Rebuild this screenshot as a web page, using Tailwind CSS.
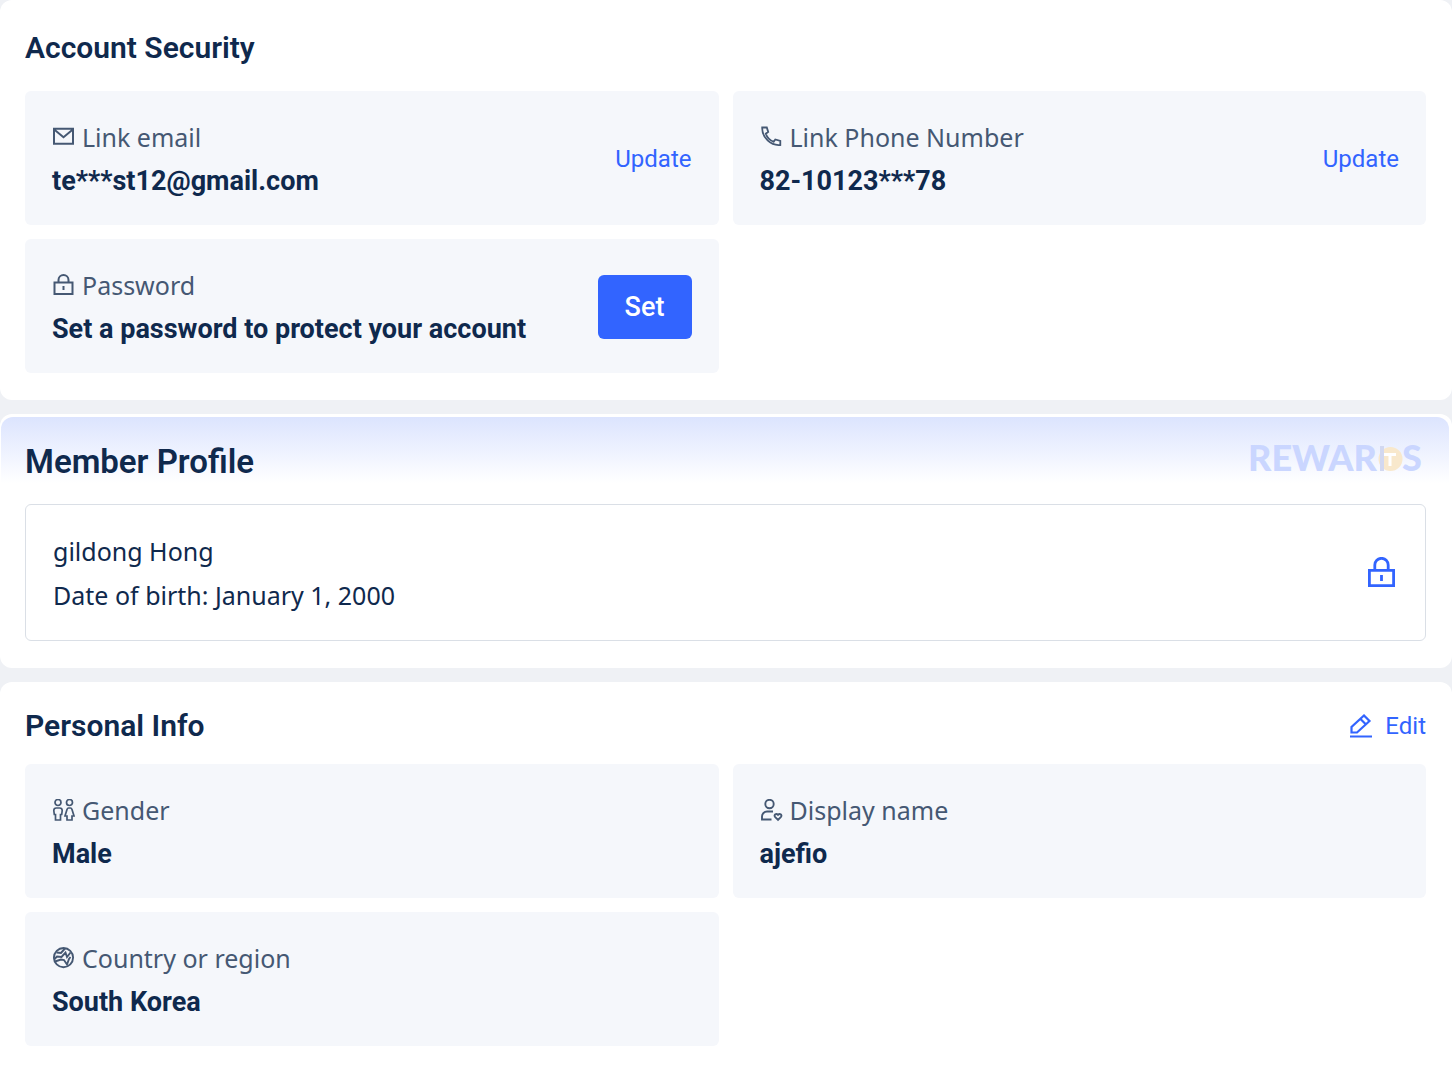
<!DOCTYPE html>
<html lang="en">
<head>
<meta charset="utf-8">
<meta name="viewport" content="width=device-width, initial-scale=1">
<title>Account</title>
<script src="https://cdn.jsdelivr.net/npm/@tailwindcss/browser@4"></script>
</head>
<body class="flex min-h-screen flex-col gap-[14px] bg-[#eff1f5] font-[Roboto,sans-serif] text-[#0f294d]">

<section class="rounded-xl bg-white pt-6 pr-[26px] pb-[27px] pl-[25px]">
  <h2 class="text-[30px] leading-[48px] font-semibold">Account Security</h2>
  <div class="mt-[19px] grid grid-cols-2 gap-[14px]">
    <div class="flex items-center justify-between rounded-md bg-[#f5f7fb] pt-6 pr-[27px] pb-[22px] pl-[27px]">
      <dl>
        <dt class="flex items-center gap-[7px] font-['Noto_Sans',sans-serif] text-[25px] leading-[44px] text-[#455873]">
          <svg class="size-[23px]" viewBox="0 0 23 23" fill="none" stroke="currentColor" stroke-width="2"><path d="M2 2.800h19v15H2zM2.500 3.800l9 7.500 9-7.500"/></svg>
          Link email
        </dt>
        <dd class="text-[27px] leading-[44px] font-bold">te***st12@gmail.com</dd>
      </dl>
      <a href="#" class="text-2xl text-[#3264ff]">Update</a>
    </div>
    <div class="flex items-center justify-between rounded-md bg-[#f5f7fb] pt-6 pr-[27px] pb-[22px] pl-[27px]">
      <dl>
        <dt class="flex items-center gap-[7px] font-['Noto_Sans',sans-serif] text-[25px] leading-[44px] text-[#455873]">
          <svg class="size-[23px]" viewBox="0 0 23 23" fill="none" stroke="currentColor" stroke-width="1.800"><path d="M2.200 1.500H6.800L8.200 6 5.800 7.700C7 11.200 10 14.200 13.600 15.800L15.300 13.500 20.300 15V19C11 20 1.800 11.700 2.200 1.500Z"/></svg>
          Link Phone Number
        </dt>
        <dd class="text-[27px] leading-[44px] font-bold">82-10123***78</dd>
      </dl>
      <a href="#" class="text-2xl text-[#3264ff]">Update</a>
    </div>
    <div class="flex items-center justify-between rounded-md bg-[#f5f7fb] pt-6 pr-[27px] pb-[22px] pl-[27px]">
      <dl>
        <dt class="flex items-center gap-[7px] font-['Noto_Sans',sans-serif] text-[25px] leading-[44px] text-[#455873]">
          <svg class="size-[23px]" viewBox="0 0 23 23" fill="none" stroke="currentColor" stroke-width="2"><path d="M2.500 8.500h18v11.500h-18zM6.500 8.500V6a5 5 0 0 1 10 0v2.500M11.500 12v4"/></svg>
          Password
        </dt>
        <dd class="text-[27px] leading-[44px] font-bold">Set a password to protect your account</dd>
      </dl>
      <button type="button" class="h-16 w-[94px] rounded-md bg-[#3264ff] text-[27px] font-medium text-white">Set</button>
    </div>
  </div>
</section>

<section class="rounded-xl bg-white pt-[3px] pr-[3px] pb-[27px] pl-px">
  <div class="rounded-t-xl bg-linear-to-b from-[#dce4fe] to-white to-[66px] pr-[23px] pl-6">
    <div class="flex items-center justify-between pt-5">
      <h2 class="text-[33px] leading-[50px] font-semibold">Member Profile</h2>
      <svg class="h-[50px] w-[180px]" viewBox="0 -5 180 50" role="img" aria-label="Rewards" font-family="Lato, sans-serif" font-weight="900" font-size="36" fill="#cad6ff">
        <text x="2" y="29">REWAR</text>
        <circle cx="144.500" cy="17" r="12" fill="#f8e8cc"/>
        <path d="M134 4h4v25h-4z" fill="#d2d8f0"/>
        <path d="M138 11h12v3h-4.500v10h-3v-10H138z" fill="#fff"/>
        <text x="156" y="29">S</text>
      </svg>
    </div>
    <div class="mt-[17px] flex items-center justify-between rounded-md border border-[#dadfe6] bg-white pt-6 pr-[29px] pb-[23px] pl-[27px]">
      <div class="font-['Noto_Sans',sans-serif] text-[25px] leading-[44px]">
        <p>gildong Hong</p>
        <p>Date of birth: January 1, 2000</p>
      </div>
      <svg class="h-8 w-[29px] text-[#3264ff]" viewBox="0 0 29 32" fill="none" stroke="currentColor" stroke-width="2.800"><path d="M2.400 13.400h24.200v15.200H2.400zM7.800 13V8a6.700 6.700 0 0 1 13.400 0v5M14.500 18v6"/></svg>
    </div>
  </div>
</section>

<section class="grow rounded-t-xl bg-white pt-5 pr-[26px] pb-[21px] pl-[25px]">
  <div class="flex items-center justify-between">
    <h2 class="text-[30px] leading-[48px] font-semibold">Personal Info</h2>
    <a href="#" class="flex items-center gap-3 text-2xl text-[#3264ff]">
      <svg class="size-6" viewBox="0 0 24 24" fill="none" stroke="currentColor" stroke-width="2.200"><path d="M2.500 18.500V13L15 1.500 20.500 7 8 18.500zM11.500 5l5.500 5.500M1 22.500h22"/></svg>
      Edit
    </a>
  </div>
  <div class="mt-[14px] grid grid-cols-2 gap-[14px]">
    <div class="rounded-md bg-[#f5f7fb] pt-6 pb-[22px] pl-[27px]">
      <dl>
        <dt class="flex items-center gap-[7px] font-['Noto_Sans',sans-serif] text-[25px] leading-[44px] text-[#455873]">
          <svg class="size-[23px]" viewBox="0 0 23 23" fill="none" stroke="currentColor" stroke-width="1.700"><circle cx="6" cy="3.500" r="3"/><circle cx="17.500" cy="3.500" r="3"/><path d="M1.800 11.500q0-2.500 2.500-2.500h3.400q2.500 0 2.500 2.500l-.5 4H8.500V21h-5V15.500H2.300zM16.500 9h2q1 0 1.500 1.500l2 6.500h-2v4h-5V17h-2l2-6.500Q15.500 9 16.500 9z"/></svg>
          Gender
        </dt>
        <dd class="text-[27px] leading-[44px] font-bold">Male</dd>
      </dl>
    </div>
    <div class="rounded-md bg-[#f5f7fb] pt-6 pb-[22px] pl-[27px]">
      <dl>
        <dt class="flex items-center gap-[7px] font-['Noto_Sans',sans-serif] text-[25px] leading-[44px] text-[#455873]">
          <svg class="size-[23px]" viewBox="0 0 23 23" fill="none" stroke="currentColor" stroke-width="1.900"><circle cx="9.500" cy="5" r="4.200"/><path d="M13 12.500H7a5 5 0 0 0-5 5v3H11.500M18 20.800l-3-3c-1.500-2 1.300-3.800 3-2 1.700-1.800 4.500 0 3 2z"/></svg>
          Display name
        </dt>
        <dd class="text-[27px] leading-[44px] font-bold">ajefio</dd>
      </dl>
    </div>
    <div class="rounded-md bg-[#f5f7fb] pt-6 pb-[22px] pl-[27px]">
      <dl>
        <dt class="flex items-center gap-[7px] font-['Noto_Sans',sans-serif] text-[25px] leading-[44px] text-[#455873]">
          <svg class="size-[23px]" viewBox="0 0 23 23" fill="none" stroke="currentColor" stroke-width="1.900"><circle cx="11.500" cy="10.600" r="9.600"/><path d="M4.500 5.500l4.500.5L13 1.500M2 12.500l3-3 4.500 .500 4-4.500 1.500 4.500 3.500-4.500M3 14.500l6-2 3 .500 3 4.500 2-5.500 1.500-2"/></svg>
          Country or region
        </dt>
        <dd class="text-[27px] leading-[44px] font-bold">South Korea</dd>
      </dl>
    </div>
  </div>
</section>

</body>
</html>
